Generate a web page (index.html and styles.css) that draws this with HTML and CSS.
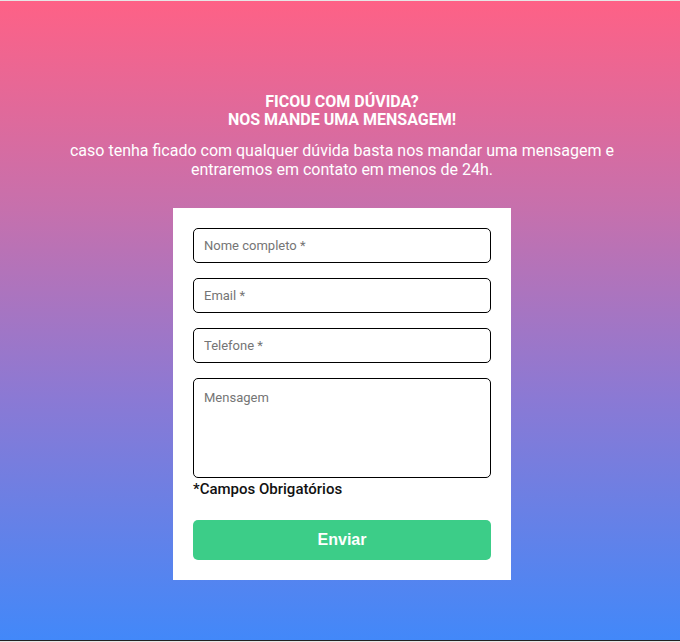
FILE: index.html
```html
<!DOCTYPE html>
<html lang="pt-BR">
<head>
<meta charset="utf-8">
<title>Contato</title>
<link rel="stylesheet" href="styles.css">
</head>
<body>
<section class="contact">
  <div class="intro">
    <h2 class="title">FICOU COM DÚVIDA?<br>NOS MANDE UMA MENSAGEM!</h2>
    <p class="lead">caso tenha ficado com qualquer dúvida basta nos mandar uma mensagem e<br>entraremos em contato em menos de 24h.</p>
  </div>
  <form class="card">
    <input class="field" type="text" placeholder="Nome completo *">
    <input class="field" type="email" placeholder="Email *">
    <input class="field" type="tel" placeholder="Telefone *">
    <textarea class="field area" placeholder="Mensagem"></textarea>
    <span class="note">*Campos Obrigatórios</span>
    <button class="send" type="button">Enviar</button>
  </form>
</section>
<div class="bottom-line"></div>
</body>
</html>
```
FILE: styles.css
```css
html, body {
  margin: 0;
  padding: 0;
}
body {
  background: #e6e6e6;
  padding-top: 1px;
  font-family: Roboto, "Liberation Sans", sans-serif;
}
.contact {
  height: 639px;
  box-sizing: border-box;
  background: linear-gradient(180deg, #fe6186 0%, #c770ac 32%, #8b79d4 62%, #4288f9 100%);
  display: flex;
  flex-direction: column;
  align-items: center;
  padding-top: 92px;
  padding-left: 4px;
}
.intro {
  text-align: center;
  color: #fff;
}
.title {
  margin: 0;
  font-size: 16px;
  font-weight: 700;
  line-height: 18px;
}
.lead {
  margin: 12px 0 0;
  font-size: 16px;
  line-height: 19px;
}
.card {
  margin-top: 29px;
  width: 338px;
  box-sizing: border-box;
  background: #fff;
  padding: 20px;
  display: flex;
  flex-direction: column;
}
.field {
  display: block;
  box-sizing: border-box;
  width: 298px;
  height: 35px;
  border: 1px solid #000;
  border-radius: 5px;
  padding: 0 10px;
  font-family: Roboto, "Liberation Sans", sans-serif;
  font-size: 13px;
  color: #222;
  margin-bottom: 15px;
  outline: none;
}
.field::placeholder {
  color: #757575;
}
.area {
  height: 100px;
  padding: 11px 10px;
  margin-bottom: 2px;
  resize: none;
}
.note {
  font-size: 15px;
  font-weight: 500;
  color: #111;
  line-height: 18px;
}
.send {
  margin-top: 22px;
  height: 40px;
  border: none;
  border-radius: 5px;
  background: #3ccd88;
  color: #fff;
  font-family: "Liberation Sans", Arial, sans-serif;
  font-weight: 700;
  font-size: 16px;
}
.bottom-line {
  height: 1px;
  background: #222;
}
```
